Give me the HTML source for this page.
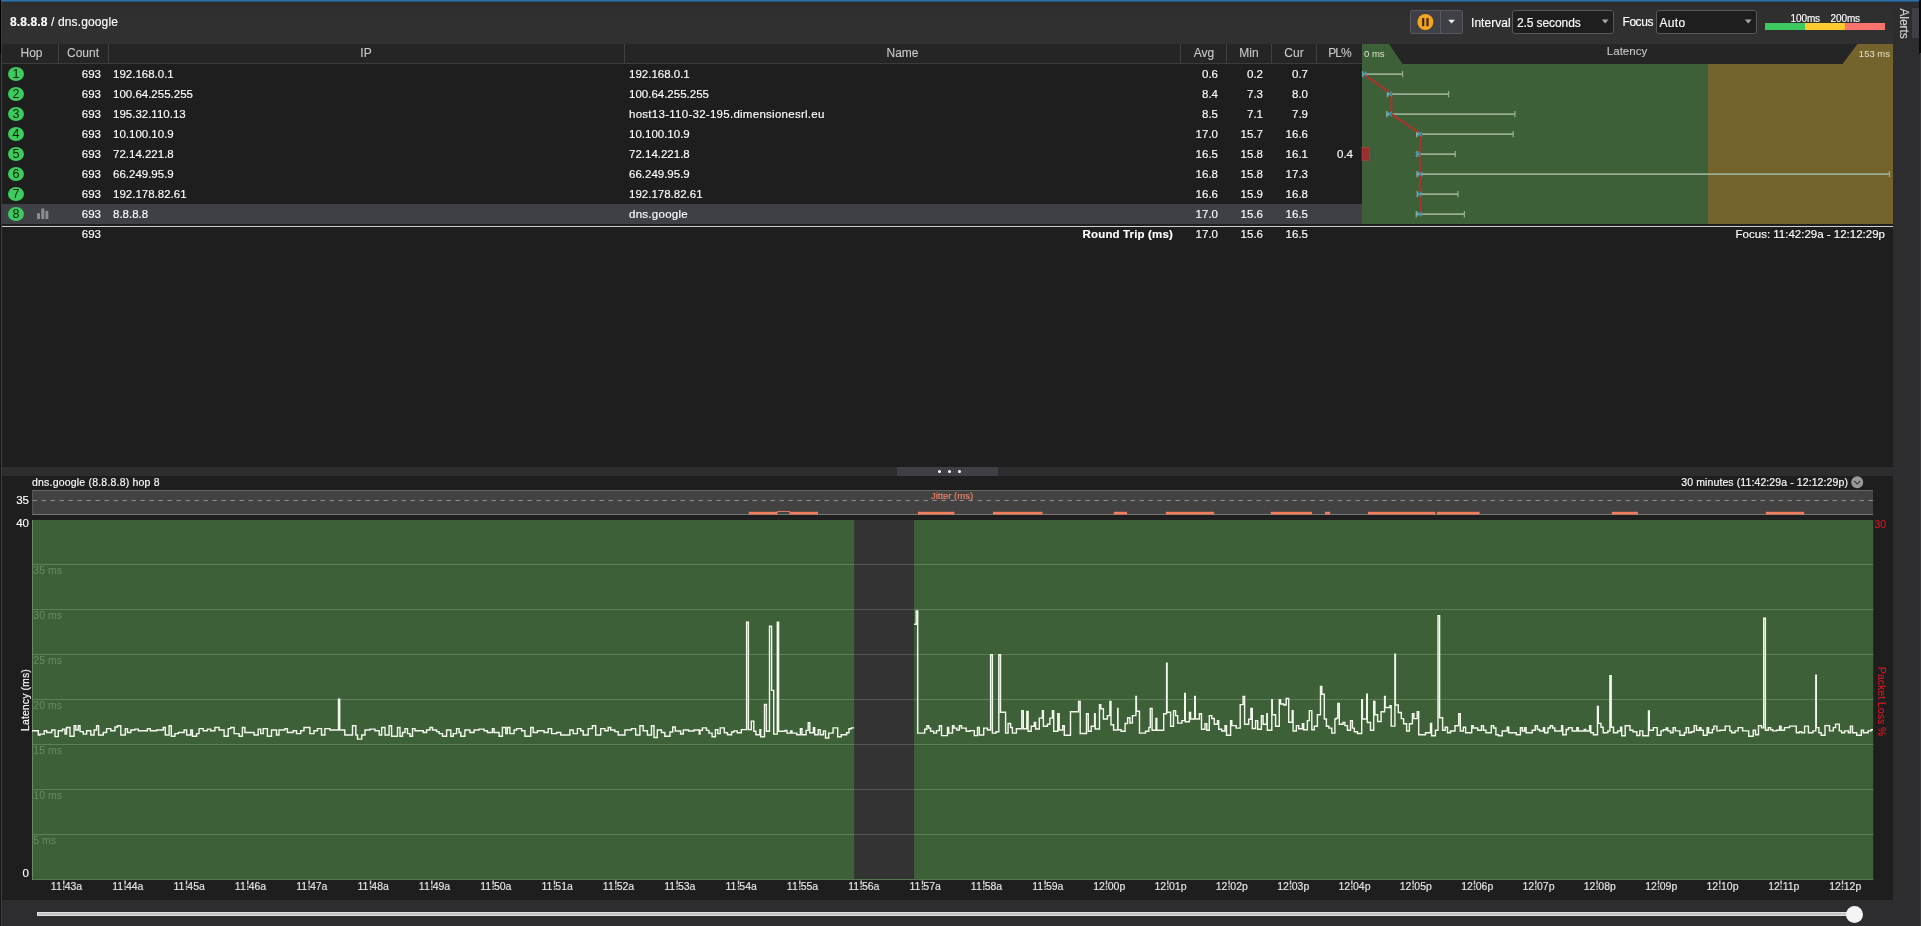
<!DOCTYPE html><html><head><meta charset="utf-8"><title>8.8.8.8 / dns.google</title><style>
*{margin:0;padding:0;box-sizing:border-box}
html,body{width:1921px;height:926px;overflow:hidden;background:#1e1e1e}
body{position:relative;will-change:transform;-webkit-text-stroke:0.14px;font-family:"Liberation Sans",sans-serif;font-size:11.5px;color:#fff;line-height:1}
.a{position:absolute;white-space:nowrap}
.t{position:absolute;white-space:nowrap;height:20px;line-height:20px}
.r{text-align:right}
.c{text-align:center}
.h{color:#c9c9c9;font-size:12px;-webkit-text-stroke:0.1px}
.sep{position:absolute;top:44px;width:1px;height:19px;background:#3f3f46}
.num{-webkit-text-stroke:0;position:absolute;left:8px;width:16.2px;height:14.4px;border-radius:50%;background:#3dcb5e;color:#0e200d;font-size:12.5px;line-height:14.8px;text-align:center}
.tl{position:absolute;top:880px;width:40px;text-align:center;font-size:10.5px;line-height:12px;color:#e6e6e6}
.gl{-webkit-text-stroke:0;position:absolute;left:33.3px;font-size:10.5px;color:#6a8962;line-height:12px}
</style></head><body>
<div class="a" style="left:0;top:0;width:1919px;height:1px;background:#2d72ac"></div><div class="a" style="left:0;top:1px;width:1919px;height:1px;background:#234f78"></div>
<div class="a" style="left:0;top:2px;width:1921px;height:41.5px;background:linear-gradient(#2d2d2e,#2f2f30 25%,#313132)"></div>
<div class="a" style="left:1893px;top:2px;width:28px;height:924px;background:#2d2d30"></div>
<div class="a" style="left:1912px;top:8px;width:7px;height:30px;background:#3f3f46"></div>
<div class="a" style="left:1919.3px;top:0;width:2px;height:54px;background:#0a0a0a"></div>
<div class="a" style="left:1919.5px;top:53px;width:1px;height:873px;background:#3a3a3d"></div>
<div class="a" style="left:1898px;top:8px;width:12px;height:30px;"><div style="position:absolute;left:0;top:0;transform-origin:0 0;transform:translate(11.7px,0.3px) rotate(90deg);font-size:12.2px;line-height:13px;color:#d2d2d2;white-space:nowrap;letter-spacing:-0.1px">Alerts</div></div>
<div class="a" style="left:0;top:0;width:1px;height:54px;background:#000"></div><div class="a" style="left:0;top:54px;width:1px;height:872px;background:#141818"></div>
<div class="a" style="left:1px;top:2px;width:1px;height:924px;background:#3a3e3e"></div>
<div class="a" style="left:10px;top:15px;font-size:12px;line-height:14px;letter-spacing:0.13px"><b>8.8.8.8</b> / dns.google</div>
<div class="a" style="left:1409.5px;top:10px;width:53px;height:23.5px;background:#3f3f46;border:1px solid #56565c;border-radius:2px"></div>
<div class="a" style="left:1440px;top:11px;width:1px;height:21.5px;background:#5a5a60"></div>
<svg class="a" style="left:1417px;top:14px" width="17" height="17" viewBox="0 0 17 17"><circle cx="8.4" cy="8" r="8" fill="#f7a51c"/><rect x="5.1" y="4" width="2.2" height="8.2" fill="#3a2a10"/><rect x="9.4" y="4" width="2.2" height="8.2" fill="#3a2a10"/></svg>
<svg class="a" style="left:1447px;top:19px" width="10" height="6" viewBox="0 0 10 6"><path d="M1.2 0.8H8.0L4.6 4.6Z" fill="#f0f0f0"/></svg>
<div class="a" style="left:1471px;top:15.5px;font-size:12px;line-height:14px;letter-spacing:0.05px">Interval</div>
<div class="a" style="left:1511.8px;top:10px;width:102.2px;height:23.5px;background:#1e1e1e;border:1px solid #58585c;border-radius:3px"></div>
<div class="a" style="left:1517px;top:16px;font-size:12px;line-height:14px;letter-spacing:-0.1px">2.5 seconds</div>
<svg class="a" style="left:1601px;top:19px" width="10" height="6" viewBox="0 0 10 6"><path d="M0.8 0.6H7.6L4.2 4.6Z" fill="#a8a8a8"/></svg>
<div class="a" style="left:1622.5px;top:15px;font-size:12px;line-height:14px;letter-spacing:-0.45px">Focus</div>
<div class="a" style="left:1655.5px;top:10px;width:101px;height:23.5px;background:#1e1e1e;border:1px solid #58585c;border-radius:3px"></div>
<div class="a" style="left:1659.5px;top:16px;font-size:12px;line-height:14px;letter-spacing:0.3px">Auto</div>
<svg class="a" style="left:1744px;top:19px" width="10" height="6" viewBox="0 0 10 6"><path d="M0.8 0.6H7.6L4.2 4.6Z" fill="#a8a8a8"/></svg>
<div class="a" style="left:1765px;top:23px;width:40px;height:6.8px;background:#3ec95e"></div>
<div class="a" style="left:1805px;top:23px;width:40px;height:6.8px;background:#fdca30"></div>
<div class="a" style="left:1845px;top:23px;width:40.3px;height:6.8px;background:#fa746e"></div>
<div class="a" style="left:1790.5px;top:13px;font-size:10px;line-height:12px;letter-spacing:-0.1px">100ms</div>
<div class="a" style="left:1830.5px;top:13px;font-size:10px;line-height:12px;letter-spacing:-0.1px">200ms</div>
<div class="a" style="left:2px;top:43.5px;width:1891px;height:20px;background:#252526"></div>
<div class="a" style="left:2px;top:63px;width:1360px;height:1px;background:#3c3c40"></div>
<div class="sep" style="left:58px"></div>
<div class="sep" style="left:108px"></div>
<div class="sep" style="left:624px"></div>
<div class="sep" style="left:1180px"></div>
<div class="sep" style="left:1226px"></div>
<div class="sep" style="left:1271px"></div>
<div class="sep" style="left:1316px"></div>
<div class="t c h" style="left:-8.5px;top:42.8px;width:80px">Hop</div>
<div class="t c h" style="left:43px;top:42.8px;width:80px">Count</div>
<div class="t c h" style="left:326px;top:42.8px;width:80px">IP</div>
<div class="t c h" style="left:862.5px;top:42.8px;width:80px">Name</div>
<div class="t c h" style="left:1164px;top:42.8px;width:80px">Avg</div>
<div class="t c h" style="left:1209px;top:42.8px;width:80px">Min</div>
<div class="t c h" style="left:1254px;top:42.8px;width:80px">Cur</div>
<div class="t c h" style="left:1299.5px;top:42.8px;width:80px"><span style="letter-spacing:-0.9px">PL%</span></div>
<div class="t c h" style="left:1587px;top:41px;width:80px"><span style="font-size:11.5px">Latency</span></div>
<svg class="a" style="left:0;top:0" width="1921" height="240" viewBox="0 0 1921 240"><rect x="1362" y="63" width="531" height="1" fill="#1f271e"/><rect x="1362" y="64" width="531" height="160" fill="#3e6038"/><rect x="1708" y="64" width="185" height="160" fill="#75632d"/><path d="M1362 44H1389L1402.5 64H1362Z" fill="#3e6038"/><path d="M1893 44H1857.5L1842.5 64H1893Z" fill="#75632d"/><path d="M1362.6 74.1H1402.6" stroke="#97ae93" stroke-width="1.6" fill="none"/><path d="M1362.6 70.9V77.3M1402.6 70.9V77.3" stroke="#97ae93" stroke-width="1.2" fill="none"/><path d="M1387.4 94.1H1448.6" stroke="#97ae93" stroke-width="1.6" fill="none"/><path d="M1387.4 90.9V97.3M1448.6 90.9V97.3" stroke="#97ae93" stroke-width="1.2" fill="none"/><path d="M1386.8 114.1H1515.0" stroke="#97ae93" stroke-width="1.6" fill="none"/><path d="M1386.8 110.9V117.3M1515.0 110.9V117.3" stroke="#97ae93" stroke-width="1.2" fill="none"/><path d="M1416.6 134.1H1513.2" stroke="#97ae93" stroke-width="1.6" fill="none"/><path d="M1416.6 130.9V137.3M1513.2 130.9V137.3" stroke="#97ae93" stroke-width="1.2" fill="none"/><path d="M1417.0 154.1H1455.3" stroke="#97ae93" stroke-width="1.6" fill="none"/><path d="M1417.0 150.9V157.3M1455.3 150.9V157.3" stroke="#97ae93" stroke-width="1.2" fill="none"/><path d="M1417.0 174.1H1889.5" stroke="#97ae93" stroke-width="1.6" fill="none"/><path d="M1417.0 170.9V177.3M1889.5 170.9V177.3" stroke="#97ae93" stroke-width="1.2" fill="none"/><path d="M1417.3 194.1H1458.0" stroke="#97ae93" stroke-width="1.6" fill="none"/><path d="M1417.3 190.9V197.3M1458.0 190.9V197.3" stroke="#97ae93" stroke-width="1.2" fill="none"/><path d="M1416.3 214.1H1464.4" stroke="#97ae93" stroke-width="1.6" fill="none"/><path d="M1416.3 210.9V217.3M1464.4 210.9V217.3" stroke="#97ae93" stroke-width="1.2" fill="none"/><polyline points="1364.1,74.1 1391.2,94.1 1391.5,114.1 1421.0,134.1 1419.3,154.1 1420.3,174.1 1419.6,194.1 1421.0,214.1" fill="none" stroke="#a8342c" stroke-width="2"/><path d="M1361.9 71.8l4.6 4.6m0 -4.6l-4.6 4.6" stroke="#3ba2c1" stroke-width="1.25" stroke-opacity="0.92" fill="none"/><path d="M1387.5 91.8l4.6 4.6m0 -4.6l-4.6 4.6" stroke="#3ba2c1" stroke-width="1.25" stroke-opacity="0.92" fill="none"/><path d="M1387.3 111.8l4.6 4.6m0 -4.6l-4.6 4.6" stroke="#3ba2c1" stroke-width="1.25" stroke-opacity="0.92" fill="none"/><path d="M1417.3 131.8l4.6 4.6m0 -4.6l-4.6 4.6" stroke="#3ba2c1" stroke-width="1.25" stroke-opacity="0.92" fill="none"/><path d="M1415.6 151.8l4.6 4.6m0 -4.6l-4.6 4.6" stroke="#3ba2c1" stroke-width="1.25" stroke-opacity="0.92" fill="none"/><path d="M1417.9 171.8l4.6 4.6m0 -4.6l-4.6 4.6" stroke="#3ba2c1" stroke-width="1.25" stroke-opacity="0.92" fill="none"/><path d="M1416.9 191.8l4.6 4.6m0 -4.6l-4.6 4.6" stroke="#3ba2c1" stroke-width="1.25" stroke-opacity="0.92" fill="none"/><path d="M1416.9 211.8l4.6 4.6m0 -4.6l-4.6 4.6" stroke="#3ba2c1" stroke-width="1.25" stroke-opacity="0.92" fill="none"/><rect x="1362" y="147.3" width="7.5" height="13.2" fill="#9a2f2f" stroke="#b04545" stroke-width="0.6"/></svg>
<div class="a" style="left:1364px;top:47.5px;font-size:9.5px;line-height:12px;-webkit-text-stroke:0;color:#d4e3cf">0 ms</div>
<div class="a r" style="left:1840px;width:50px;top:47.5px;font-size:9.5px;line-height:12px;-webkit-text-stroke:0;color:#e6e0c4">153 ms</div>
<div class="num" style="top:66.8px">1</div>
<div class="t r" style="left:51px;top:63.8px;width:50px">693</div>
<div class="t" style="left:113px;top:63.8px">192.168.0.1</div>
<div class="t" style="left:629px;top:63.8px">192.168.0.1</div>
<div class="t r" style="left:1168px;top:63.8px;width:50px">0.6</div>
<div class="t r" style="left:1213px;top:63.8px;width:50px">0.2</div>
<div class="t r" style="left:1258px;top:63.8px;width:50px">0.7</div>
<div class="num" style="top:86.8px">2</div>
<div class="t r" style="left:51px;top:83.8px;width:50px">693</div>
<div class="t" style="left:113px;top:83.8px">100.64.255.255</div>
<div class="t" style="left:629px;top:83.8px">100.64.255.255</div>
<div class="t r" style="left:1168px;top:83.8px;width:50px">8.4</div>
<div class="t r" style="left:1213px;top:83.8px;width:50px">7.3</div>
<div class="t r" style="left:1258px;top:83.8px;width:50px">8.0</div>
<div class="num" style="top:106.8px">3</div>
<div class="t r" style="left:51px;top:103.8px;width:50px">693</div>
<div class="t" style="left:113px;top:103.8px">195.32.110.13</div>
<div class="t" style="left:629px;top:103.8px;letter-spacing:0.27px">host13-110-32-195.dimensionesrl.eu</div>
<div class="t r" style="left:1168px;top:103.8px;width:50px">8.5</div>
<div class="t r" style="left:1213px;top:103.8px;width:50px">7.1</div>
<div class="t r" style="left:1258px;top:103.8px;width:50px">7.9</div>
<div class="num" style="top:126.8px">4</div>
<div class="t r" style="left:51px;top:123.8px;width:50px">693</div>
<div class="t" style="left:113px;top:123.8px">10.100.10.9</div>
<div class="t" style="left:629px;top:123.8px">10.100.10.9</div>
<div class="t r" style="left:1168px;top:123.8px;width:50px">17.0</div>
<div class="t r" style="left:1213px;top:123.8px;width:50px">15.7</div>
<div class="t r" style="left:1258px;top:123.8px;width:50px">16.6</div>
<div class="num" style="top:146.8px">5</div>
<div class="t r" style="left:51px;top:143.8px;width:50px">693</div>
<div class="t" style="left:113px;top:143.8px">72.14.221.8</div>
<div class="t" style="left:629px;top:143.8px">72.14.221.8</div>
<div class="t r" style="left:1168px;top:143.8px;width:50px">16.5</div>
<div class="t r" style="left:1213px;top:143.8px;width:50px">15.8</div>
<div class="t r" style="left:1258px;top:143.8px;width:50px">16.1</div>
<div class="t r" style="left:1303px;top:143.8px;width:50px">0.4</div>
<div class="num" style="top:166.8px">6</div>
<div class="t r" style="left:51px;top:163.8px;width:50px">693</div>
<div class="t" style="left:113px;top:163.8px">66.249.95.9</div>
<div class="t" style="left:629px;top:163.8px">66.249.95.9</div>
<div class="t r" style="left:1168px;top:163.8px;width:50px">16.8</div>
<div class="t r" style="left:1213px;top:163.8px;width:50px">15.8</div>
<div class="t r" style="left:1258px;top:163.8px;width:50px">17.3</div>
<div class="num" style="top:186.8px">7</div>
<div class="t r" style="left:51px;top:183.8px;width:50px">693</div>
<div class="t" style="left:113px;top:183.8px">192.178.82.61</div>
<div class="t" style="left:629px;top:183.8px">192.178.82.61</div>
<div class="t r" style="left:1168px;top:183.8px;width:50px">16.6</div>
<div class="t r" style="left:1213px;top:183.8px;width:50px">15.9</div>
<div class="t r" style="left:1258px;top:183.8px;width:50px">16.8</div>
<div class="a" style="left:2px;top:204px;width:1360px;height:20px;background:#3e4046"></div>
<div class="num" style="top:206.8px">8</div>
<div class="t r" style="left:51px;top:203.8px;width:50px">693</div>
<div class="t" style="left:113px;top:203.8px">8.8.8.8</div>
<div class="t" style="left:629px;top:203.8px;letter-spacing:0.27px">dns.google</div>
<div class="t r" style="left:1168px;top:203.8px;width:50px">17.0</div>
<div class="t r" style="left:1213px;top:203.8px;width:50px">15.6</div>
<div class="t r" style="left:1258px;top:203.8px;width:50px">16.5</div>
<svg class="a" style="left:36px;top:207px" width="14" height="13" viewBox="0 0 14 13"><rect x="1" y="6.2" width="3" height="5.8" fill="#8c8c8c"/><rect x="5.3" y="1.5" width="3" height="10.5" fill="#8c8c8c"/><rect x="9.4" y="3.9" width="2.9" height="8.1" fill="#8c8c8c"/></svg>
<div class="a" style="left:2px;top:225.8px;width:1891px;height:1.4px;background:#cfcfcf"></div>
<div class="t r" style="left:51px;top:223.6px;width:50px">693</div>
<div class="t r" style="left:973px;top:223.6px;width:200px;font-weight:bold;letter-spacing:0.15px">Round Trip (ms)</div>
<div class="t r" style="left:1168px;top:223.6px;width:50px">17.0</div>
<div class="t r" style="left:1213px;top:223.6px;width:50px">15.6</div>
<div class="t r" style="left:1258px;top:223.6px;width:50px">16.5</div>
<div class="t r" style="left:1585px;top:223.6px;width:300px">Focus: 11:42:29a - 12:12:29p</div>
<div class="a" style="left:2px;top:467.2px;width:1891px;height:9.2px;background:#2d2d30"></div>
<div class="a" style="left:897px;top:467.2px;width:100.5px;height:9.2px;background:#3f3f46"></div>
<div class="a" style="left:937.5px;top:469.6px;width:3.8px;height:3.8px;border-radius:50%;background:#fff"></div>
<div class="a" style="left:947.6px;top:469.6px;width:3.8px;height:3.8px;border-radius:50%;background:#fff"></div>
<div class="a" style="left:957.6px;top:469.6px;width:3.8px;height:3.8px;border-radius:50%;background:#fff"></div>
<div class="a" style="left:32px;top:475.8px;font-size:10.5px;line-height:12px;letter-spacing:0.2px">dns.google (8.8.8.8) hop 8</div>
<div class="a r" style="left:1548px;width:300px;top:475.6px;font-size:10.5px;line-height:12px;letter-spacing:0.1px">30 minutes (11:42:29a - 12:12:29p)</div>
<svg class="a" style="left:1851px;top:476.4px" width="13" height="13" viewBox="0 0 13 13"><circle cx="6.2" cy="6.2" r="6" fill="#9a9a9a"/><path d="M3.2 5l3 3l3 -3" stroke="#4a4a4a" stroke-width="1.5" fill="none"/></svg>
<div class="a" style="left:32px;top:490px;width:1841px;height:25px;background:#424242;border-top:1px solid #666;border-bottom:1px solid #777;border-left:1px solid #555"></div>
<svg class="a" style="left:0;top:486px" width="1921" height="34" viewBox="0 486 1921 34"><path d="M32.6 500.5H1873" stroke="#929292" stroke-width="1" stroke-dasharray="4.2 4.8" fill="none"/><rect x="748.8" y="511.8" width="28.5" height="2.6" fill="#f47d5e"/><rect x="789.8" y="511.8" width="28.2" height="2.6" fill="#f47d5e"/><rect x="918.0" y="511.8" width="36.4" height="2.6" fill="#f47d5e"/><rect x="993.0" y="511.8" width="49.5" height="2.6" fill="#f47d5e"/><rect x="1113.8" y="511.8" width="13.2" height="2.6" fill="#f47d5e"/><rect x="1165.8" y="511.8" width="48.4" height="2.6" fill="#f47d5e"/><rect x="1270.8" y="511.8" width="41.2" height="2.6" fill="#f47d5e"/><rect x="1325.0" y="511.8" width="5.2" height="2.6" fill="#f47d5e"/><rect x="1368.0" y="511.8" width="67.4" height="2.6" fill="#f47d5e"/><rect x="1437.0" y="511.8" width="42.6" height="2.6" fill="#f47d5e"/><rect x="1611.8" y="511.8" width="26.2" height="2.6" fill="#f47d5e"/><rect x="1765.8" y="511.8" width="38.4" height="2.6" fill="#f47d5e"/><path d="M777.3 513.5V511.5H789.8V513.5" stroke="#f47d5e" stroke-width="0.9" fill="none"/></svg>
<div class="a c" style="left:902px;width:100px;top:490.2px;font-size:9.5px;line-height:12px;color:#f08468">Jitter (ms)</div>
<div class="a r" style="left:0;width:29px;top:494px;font-size:11.5px;line-height:12px">35</div>
<div class="a r" style="left:0;width:29px;top:516.5px;font-size:11.5px;line-height:12px">40</div>
<div class="a r" style="left:0;width:29px;top:866.5px;font-size:11.5px;line-height:12px">0</div>
<svg class="a" style="left:0;top:515px" width="1921" height="370" viewBox="0 515 1921 370"><rect x="32" y="520" width="1841.2" height="360" fill="#3e6038"/><rect x="854.2" y="520" width="59.9" height="360" fill="#333333"/><path d="M32 834.5H854.2M914.1 834.5H1873.2" stroke="#5d7e57" stroke-width="1" fill="none"/><path d="M854.2 834.5H914.1" stroke="#555555" stroke-width="1" fill="none"/><path d="M32 789.5H854.2M914.1 789.5H1873.2" stroke="#5d7e57" stroke-width="1" fill="none"/><path d="M854.2 789.5H914.1" stroke="#555555" stroke-width="1" fill="none"/><path d="M32 744.5H854.2M914.1 744.5H1873.2" stroke="#5d7e57" stroke-width="1" fill="none"/><path d="M854.2 744.5H914.1" stroke="#555555" stroke-width="1" fill="none"/><path d="M32 699.5H854.2M914.1 699.5H1873.2" stroke="#5d7e57" stroke-width="1" fill="none"/><path d="M854.2 699.5H914.1" stroke="#555555" stroke-width="1" fill="none"/><path d="M32 654.5H854.2M914.1 654.5H1873.2" stroke="#5d7e57" stroke-width="1" fill="none"/><path d="M854.2 654.5H914.1" stroke="#555555" stroke-width="1" fill="none"/><path d="M32 609.5H854.2M914.1 609.5H1873.2" stroke="#5d7e57" stroke-width="1" fill="none"/><path d="M854.2 609.5H914.1" stroke="#555555" stroke-width="1" fill="none"/><path d="M32 564.5H854.2M914.1 564.5H1873.2" stroke="#5d7e57" stroke-width="1" fill="none"/><path d="M854.2 564.5H914.1" stroke="#555555" stroke-width="1" fill="none"/><path d="M32 879.5H1873.2" stroke="#55754f" stroke-width="1" fill="none"/><path d="M32.5 520V880" stroke="#6b8866" stroke-width="1" fill="none"/><path d="M32.0 730.8H38.3V735.0H40.0V734.1H44.2V730.8H46.7V732.5H51.7V730.0H55.0V736.6H58.3V730.8H62.5V729.1H65.0V734.1H66.6V727.5H70.0V736.3H74.1V725.8H75.8V730.0H78.3V725.8H80.0V731.6H83.3V734.1H86.6V730.8H90.8V735.0H94.1V730.0H96.6V725.8H98.6V735.0H103.3V732.5H106.6V728.6H110.8V730.8H115.0V727.0H117.5V725.8H120.8V735.0H125.3V728.6H127.5V732.5H130.8V730.0H134.9V729.1H138.3V730.8H147.4V728.6H150.3V730.8H156.6V730.0H163.3V727.5H165.3V735.0H169.1V725.8H171.3V736.3H174.9V733.6H178.3V732.5H184.1V730.0H186.6V735.0H190.8V730.0H192.4V736.3H196.6V733.6H199.1V728.6H203.2V730.8H207.4V729.1H210.7V730.8H214.9V727.5H219.1V730.0H224.1V736.3H228.2V728.6H230.7V727.5H234.1V733.6H239.1V736.3H242.4V727.5H244.9V732.5H254.1V735.0H258.2V729.1H260.7V733.6H263.2V728.6H267.4V736.3H271.5V730.0H276.5V735.0H279.0V730.0H284.9V728.6H287.4V732.5H293.2V730.8H296.5V733.6H300.7V730.8H304.0V727.5H309.9V733.6H314.0V730.8H317.4V728.6H321.5V735.0H324.9V728.6H329.9V730.0H338.5V699.2H339.7V730.0H344.8V735.0H350.0V735.0H352.5V725.8H355.8V735.0H357.5V739.1H361.7V735.0H365.0V730.0H370.0V729.1H375.0V730.8H379.2V735.0H381.7V727.5H385.0V735.0H389.1V725.8H391.6V736.3H397.5V727.5H400.0V736.3H402.5V732.5H405.0V728.6H407.5V733.6H410.0V736.3H412.5V728.6H415.0V730.8H423.3V732.5H426.6V730.0H430.0V727.5H432.5V730.0H436.6V731.6H439.1V733.6H442.5V736.3H446.6V730.0H450.8V736.3H453.3V733.6H456.6V728.6H459.1V732.5H460.8V736.3H464.9V730.0H469.9V732.5H474.1V730.0H479.1V729.1H484.1V730.8H487.4V732.5H492.4V728.6H494.1V732.5H499.1V736.3H502.4V727.5H505.8V733.6H507.4V727.5H509.9V733.6H514.1V730.0H516.6V728.6H521.6V730.8H524.9V736.3H530.7V727.5H533.2V732.5H537.4V730.8H544.1V732.5H548.2V728.6H551.6V733.6H556.6V732.5H560.7V735.0H569.9V730.0H573.2V733.6H577.4V728.6H580.7V730.8H583.2V735.0H588.2V728.6H592.4V725.8H595.7V735.0H600.7V728.6H604.9V730.8H608.2V727.5H610.7V730.0H614.9V731.6H618.2V735.0H624.9V730.0H631.5V728.6H635.7V735.0H639.9V725.8H643.2V730.8H647.4V735.0H651.5V725.8H654.0V737.5H657.3V730.0H661.5V732.5H664.8V736.3H670.0V732.0H672.7V727.0H675.3V731.0H680.6V734.0H683.3V730.0H688.6V731.0H693.9V730.0H699.2V734.0H700.0V730.4H702.4V727.9H706.5V730.4H708.9V733.1H712.1V736.8H715.4V729.6H717.8V733.6H720.2V727.9H724.3V732.8H727.5V734.7H731.6V732.0H734.0V730.9H737.2V732.8H741.3V729.6H746.6V622.3H748.4V729.6H751.3V721.1H753.8V731.2H755.9V734.7H759.9V729.6H760.7V736.8H764.5V704.5H766.4V731.2H769.5V626.2H771.6V690.4H773.7V734.1H777.3V622.3H778.6V731.2H785.0V730.4H787.0V733.1H790.7V730.9H792.0V733.1H796.8V734.7H800.4V728.7H802.0V734.7H806.1V730.4H808.2V722.8H809.8V732.8H813.4V727.6H814.7V734.7H818.2V729.6H820.2V734.7H823.4V730.9H825.5V738.0H828.7V733.1H833.1V727.9H837.7V736.8H841.2V734.7H846.6V732.8H849.0V728.7H851.4V727.9H854.2" stroke="#f3f8ed" stroke-width="1.4" fill="none" stroke-linejoin="miter"/><path d="M914.1 624.3H916.2V611.0H917.7V733.1H924.7V729.3H926.9V725.8H928.7V728.1H930.6V731.2H933.7V733.1H936.5V730.6H939.4V725.8H941.5V735.6H947.5V727.5H948.7V733.1H952.5V725.8H954.0V728.1H956.9V730.0H959.4V725.8H961.5V728.1H966.2V731.2H970.0V730.6H974.3V735.6H977.5V727.5H979.3V735.0H983.7V728.1H987.5V730.0H990.6V654.7H992.4V733.1H996.0V731.8H998.8V654.7H1000.5V712.2H1005.6V733.1H1008.1V723.5H1010.6V727.5H1012.4V733.1H1016.4V728.7H1021.8V710.6H1023.3V728.7H1026.8V711.5H1028.1V731.2H1031.2V726.2H1034.3V722.5H1035.6V729.0H1039.3V718.1H1042.4V710.6H1043.4V726.2H1047.4V724.3H1049.9V718.1H1052.4V710.6H1053.7V731.2H1057.8V713.7H1059.2V730.0H1062.7V725.6H1064.3V735.2H1070.5V711.8H1078.6V701.5H1080.2V733.5H1086.5V713.7H1088.3V731.2H1091.2V726.2H1094.6V713.7H1095.2V729.0H1099.5V704.6H1100.8V708.7H1103.4V719.0H1107.4V715.6H1109.9V701.5H1111.0V724.7H1113.6V730.0H1117.7V708.5H1118.0V729.7H1121.1V731.2H1125.1V723.5H1127.6V717.7H1129.9V723.1H1132.4V715.6H1135.9V696.5H1136.4V711.2H1139.5V733.1H1145.5V731.2H1148.9V727.5H1150.3V708.5H1152.1V730.2H1156.0V718.5H1156.8V730.2H1163.7V713.7H1166.6V663.1H1167.1V712.2H1170.6V726.2H1173.5V710.6H1175.6V715.6H1177.7V723.1H1181.9V720.6H1184.7V693.5H1185.3V721.8H1189.4V712.5H1190.6V719.0H1194.7V696.5H1195.3V719.0H1199.4V713.7H1201.5V729.3H1205.0V723.7H1206.8V730.2H1209.3V715.6H1211.8V718.5H1214.3V724.3H1217.5V720.6H1218.7V729.3H1221.8V731.0H1225.0V725.6H1226.5V735.2H1230.6V720.6H1231.8V725.6H1236.2V728.1H1240.2V704.6H1243.1V696.5H1244.6V724.3H1248.7V719.3H1250.9V708.5H1252.3V728.5H1255.6V720.6H1257.7V729.3H1261.4V715.6H1263.1V724.3H1266.8V713.7H1267.3V730.2H1271.8V699.7H1272.3V714.7H1275.6V726.2H1279.3V699.7H1280.6V704.0H1283.7V705.0H1286.2V698.5H1288.7V722.2H1292.2V710.6H1293.1V731.0H1296.4V725.6H1298.7V728.7H1302.4V723.7H1303.7V729.7H1307.4V720.6H1309.3V710.6H1311.8V729.7H1314.3V726.2H1317.4V714.7H1320.5V686.5H1321.8V694.3H1324.3V719.0H1326.4V726.2H1328.9V728.1H1331.8V733.1H1334.9V719.0H1336.2V718.1H1337.8V703.5H1339.3V724.3H1343.0V722.5H1344.9V725.6H1347.4V730.2H1350.5V720.6H1352.4V728.1H1354.3V731.8H1357.4V733.5H1361.7V699.7H1362.4V719.0H1366.7V694.3H1367.3V722.5H1370.5V730.2H1373.7V701.5H1374.9V714.7H1377.6V721.5H1381.1V711.8H1384.6V696.5H1385.2V707.5H1390.0V705.6H1391.2V726.1H1394.9V654.2H1395.4V705.0H1398.3V712.5H1401.3V718.6H1403.6V723.7H1406.6V731.0H1409.4V723.7H1412.4V713.6H1413.9V718.6H1417.2V711.6H1418.7V734.8H1425.5V732.8H1430.5V723.4H1431.6V735.8H1435.4V730.2H1438.0V615.6H1439.6V717.7H1442.6V730.2H1445.2V727.2H1447.5V732.8H1450.5V731.0H1455.0V725.7H1458.7V713.6H1460.3V731.0H1463.3V727.2H1465.6V732.8H1471.7V725.7H1473.2V728.0H1477.7V730.2H1481.5V725.7H1483.5V730.2H1486.0V732.8H1491.3V725.7H1493.6V728.0H1495.9V734.8H1498.6V735.8H1502.2V731.0H1507.2V727.2H1508.7V732.8H1516.3V734.8H1520.4V727.7H1522.3V731.0H1524.6V727.7H1526.1V732.8H1532.2V730.2H1535.2V725.7H1537.4V729.5H1539.7V731.0H1543.5V727.7H1544.6V732.8H1548.0V728.0H1550.3V725.7H1552.6V728.0H1554.8V731.0H1561.6V725.7H1562.7V734.8H1566.2V729.5H1568.4V727.7H1572.2V731.0H1576.8V727.7H1578.3V731.0H1584.3V729.5H1585.8V731.0H1589.6V725.7H1590.8V732.8H1593.4V734.8H1597.5V706.5H1598.3V723.4H1601.0V727.2H1603.2V732.8H1607.8V731.0H1609.9V675.8H1611.2V727.2H1613.5V732.8H1617.6V731.0H1620.6V727.2H1621.7V735.8H1625.2V725.7H1630.0V730.2H1633.0V731.7H1636.8V735.5H1639.8V730.9H1642.8V735.8H1648.5V711.0H1649.3V730.2H1653.4V727.6H1657.2V735.2H1661.0V730.9H1663.3V729.7H1666.3V727.9H1667.8V730.9H1670.5V732.7H1673.1V727.6H1675.3V730.9H1679.9V735.2H1684.4V732.7H1686.2V727.6H1688.6V732.7H1691.2V731.7H1694.2V725.6H1696.5V730.2H1699.5V727.6H1701.0V730.2H1703.3V735.2H1707.1V727.6H1708.6V732.7H1712.4V729.4H1713.9V726.1H1716.9V730.9H1719.9V730.2H1725.2V726.1H1729.8V730.9H1731.6V732.7H1735.0V730.9H1738.1V727.6H1742.6V730.9H1748.7V736.2H1753.2V730.2H1755.5V734.7H1758.5V725.6H1761.5V727.9H1763.7V618.3H1765.4V730.2H1768.3V727.6H1770.6V729.7H1772.8V730.9H1776.6V730.2H1779.6V726.1H1781.1V730.2H1784.5V727.6H1789.5V726.1H1796.3V732.7H1799.3V731.7H1801.6V732.7H1804.6V726.1H1808.4V732.7H1812.9V730.9H1815.8V675.3H1816.3V727.6H1818.9V732.7H1821.2V735.2H1825.0V725.6H1829.5V730.9H1833.3V727.6H1835.6V724.1H1839.3V730.9H1841.6V732.7H1844.6V730.9H1848.4V732.7H1850.4V726.1H1852.5V732.7H1856.7V735.2H1861.3V730.2H1863.5V732.7H1868.1V730.9H1871.1V729.7H1873.0" stroke="#f3f8ed" stroke-width="1.4" fill="none" stroke-linejoin="miter"/></svg>
<div class="gl" style="top:834.2px">5 ms</div>
<div class="gl" style="top:789.2px">10 ms</div>
<div class="gl" style="top:744.2px">15 ms</div>
<div class="gl" style="top:699.2px">20 ms</div>
<div class="gl" style="top:654.2px">25 ms</div>
<div class="gl" style="top:609.2px">30 ms</div>
<div class="gl" style="top:564.2px">35 ms</div>
<div class="a" style="left:19px;top:731px;transform-origin:0 0;transform:rotate(-90deg);font-size:10.5px;line-height:12px;letter-spacing:0.1px">Latency (ms)</div>
<div class="a" style="left:1887.5px;top:666.5px;transform-origin:0 0;transform:rotate(90deg);font-size:10.5px;line-height:12px;color:#dc1522">Packet Loss %</div>
<div class="a" style="left:1874.5px;top:518px;font-size:10.5px;line-height:12px;color:#dc1522">30</div>
<div class="tl" style="left:46.5px">11<span style="display:inline-block;width:2.9px"></span>43a</div>
<div class="tl" style="left:107.8px">11<span style="display:inline-block;width:2.9px"></span>44a</div>
<div class="tl" style="left:169.2px">11<span style="display:inline-block;width:2.9px"></span>45a</div>
<div class="tl" style="left:230.5px">11<span style="display:inline-block;width:2.9px"></span>46a</div>
<div class="tl" style="left:291.8px">11<span style="display:inline-block;width:2.9px"></span>47a</div>
<div class="tl" style="left:353.2px">11<span style="display:inline-block;width:2.9px"></span>48a</div>
<div class="tl" style="left:414.5px">11<span style="display:inline-block;width:2.9px"></span>49a</div>
<div class="tl" style="left:475.8px">11<span style="display:inline-block;width:2.9px"></span>50a</div>
<div class="tl" style="left:537.2px">11<span style="display:inline-block;width:2.9px"></span>51a</div>
<div class="tl" style="left:598.5px">11<span style="display:inline-block;width:2.9px"></span>52a</div>
<div class="tl" style="left:659.8px">11<span style="display:inline-block;width:2.9px"></span>53a</div>
<div class="tl" style="left:721.2px">11<span style="display:inline-block;width:2.9px"></span>54a</div>
<div class="tl" style="left:782.5px">11<span style="display:inline-block;width:2.9px"></span>55a</div>
<div class="tl" style="left:843.8px">11<span style="display:inline-block;width:2.9px"></span>56a</div>
<div class="tl" style="left:905.2px">11<span style="display:inline-block;width:2.9px"></span>57a</div>
<div class="tl" style="left:966.5px">11<span style="display:inline-block;width:2.9px"></span>58a</div>
<div class="tl" style="left:1027.8px">11<span style="display:inline-block;width:2.9px"></span>59a</div>
<div class="tl" style="left:1089.2px">12<span style="display:inline-block;width:2.9px"></span>00p</div>
<div class="tl" style="left:1150.5px">12<span style="display:inline-block;width:2.9px"></span>01p</div>
<div class="tl" style="left:1211.8px">12<span style="display:inline-block;width:2.9px"></span>02p</div>
<div class="tl" style="left:1273.2px">12<span style="display:inline-block;width:2.9px"></span>03p</div>
<div class="tl" style="left:1334.5px">12<span style="display:inline-block;width:2.9px"></span>04p</div>
<div class="tl" style="left:1395.8px">12<span style="display:inline-block;width:2.9px"></span>05p</div>
<div class="tl" style="left:1457.2px">12<span style="display:inline-block;width:2.9px"></span>06p</div>
<div class="tl" style="left:1518.5px">12<span style="display:inline-block;width:2.9px"></span>07p</div>
<div class="tl" style="left:1579.8px">12<span style="display:inline-block;width:2.9px"></span>08p</div>
<div class="tl" style="left:1641.2px">12<span style="display:inline-block;width:2.9px"></span>09p</div>
<div class="tl" style="left:1702.5px">12<span style="display:inline-block;width:2.9px"></span>10p</div>
<div class="tl" style="left:1763.8px">12<span style="display:inline-block;width:2.9px"></span>11p</div>
<div class="tl" style="left:1825.2px">12<span style="display:inline-block;width:2.9px"></span>12p</div>
<svg class="a" style="left:0;top:880px" width="1921" height="12" viewBox="0 880 1921 12"><path d="M63.8 880.4V890" stroke="#d0d0d0" stroke-width="1.5" stroke-dasharray="4.1 1.2 1.7 1 1.6 9" fill="none"/><path d="M125.1 880.4V890" stroke="#d0d0d0" stroke-width="1.5" stroke-dasharray="4.1 1.2 1.7 1 1.6 9" fill="none"/><path d="M186.5 880.4V890" stroke="#d0d0d0" stroke-width="1.5" stroke-dasharray="4.1 1.2 1.7 1 1.6 9" fill="none"/><path d="M247.8 880.4V890" stroke="#d0d0d0" stroke-width="1.5" stroke-dasharray="4.1 1.2 1.7 1 1.6 9" fill="none"/><path d="M309.1 880.4V890" stroke="#d0d0d0" stroke-width="1.5" stroke-dasharray="4.1 1.2 1.7 1 1.6 9" fill="none"/><path d="M370.5 880.4V890" stroke="#d0d0d0" stroke-width="1.5" stroke-dasharray="4.1 1.2 1.7 1 1.6 9" fill="none"/><path d="M431.8 880.4V890" stroke="#d0d0d0" stroke-width="1.5" stroke-dasharray="4.1 1.2 1.7 1 1.6 9" fill="none"/><path d="M493.1 880.4V890" stroke="#d0d0d0" stroke-width="1.5" stroke-dasharray="4.1 1.2 1.7 1 1.6 9" fill="none"/><path d="M554.5 880.4V890" stroke="#d0d0d0" stroke-width="1.5" stroke-dasharray="4.1 1.2 1.7 1 1.6 9" fill="none"/><path d="M615.8 880.4V890" stroke="#d0d0d0" stroke-width="1.5" stroke-dasharray="4.1 1.2 1.7 1 1.6 9" fill="none"/><path d="M677.1 880.4V890" stroke="#d0d0d0" stroke-width="1.5" stroke-dasharray="4.1 1.2 1.7 1 1.6 9" fill="none"/><path d="M738.5 880.4V890" stroke="#d0d0d0" stroke-width="1.5" stroke-dasharray="4.1 1.2 1.7 1 1.6 9" fill="none"/><path d="M799.8 880.4V890" stroke="#d0d0d0" stroke-width="1.5" stroke-dasharray="4.1 1.2 1.7 1 1.6 9" fill="none"/><path d="M861.1 880.4V890" stroke="#d0d0d0" stroke-width="1.5" stroke-dasharray="4.1 1.2 1.7 1 1.6 9" fill="none"/><path d="M922.5 880.4V890" stroke="#d0d0d0" stroke-width="1.5" stroke-dasharray="4.1 1.2 1.7 1 1.6 9" fill="none"/><path d="M983.8 880.4V890" stroke="#d0d0d0" stroke-width="1.5" stroke-dasharray="4.1 1.2 1.7 1 1.6 9" fill="none"/><path d="M1045.1 880.4V890" stroke="#d0d0d0" stroke-width="1.5" stroke-dasharray="4.1 1.2 1.7 1 1.6 9" fill="none"/><path d="M1106.5 880.4V890" stroke="#d0d0d0" stroke-width="1.5" stroke-dasharray="4.1 1.2 1.7 1 1.6 9" fill="none"/><path d="M1167.8 880.4V890" stroke="#d0d0d0" stroke-width="1.5" stroke-dasharray="4.1 1.2 1.7 1 1.6 9" fill="none"/><path d="M1229.1 880.4V890" stroke="#d0d0d0" stroke-width="1.5" stroke-dasharray="4.1 1.2 1.7 1 1.6 9" fill="none"/><path d="M1290.5 880.4V890" stroke="#d0d0d0" stroke-width="1.5" stroke-dasharray="4.1 1.2 1.7 1 1.6 9" fill="none"/><path d="M1351.8 880.4V890" stroke="#d0d0d0" stroke-width="1.5" stroke-dasharray="4.1 1.2 1.7 1 1.6 9" fill="none"/><path d="M1413.1 880.4V890" stroke="#d0d0d0" stroke-width="1.5" stroke-dasharray="4.1 1.2 1.7 1 1.6 9" fill="none"/><path d="M1474.5 880.4V890" stroke="#d0d0d0" stroke-width="1.5" stroke-dasharray="4.1 1.2 1.7 1 1.6 9" fill="none"/><path d="M1535.8 880.4V890" stroke="#d0d0d0" stroke-width="1.5" stroke-dasharray="4.1 1.2 1.7 1 1.6 9" fill="none"/><path d="M1597.1 880.4V890" stroke="#d0d0d0" stroke-width="1.5" stroke-dasharray="4.1 1.2 1.7 1 1.6 9" fill="none"/><path d="M1658.5 880.4V890" stroke="#d0d0d0" stroke-width="1.5" stroke-dasharray="4.1 1.2 1.7 1 1.6 9" fill="none"/><path d="M1719.8 880.4V890" stroke="#d0d0d0" stroke-width="1.5" stroke-dasharray="4.1 1.2 1.7 1 1.6 9" fill="none"/><path d="M1781.1 880.4V890" stroke="#d0d0d0" stroke-width="1.5" stroke-dasharray="4.1 1.2 1.7 1 1.6 9" fill="none"/><path d="M1842.5 880.4V890" stroke="#d0d0d0" stroke-width="1.5" stroke-dasharray="4.1 1.2 1.7 1 1.6 9" fill="none"/></svg>
<div class="a" style="left:2px;top:900px;width:1891px;height:26px;background:#2d2d30"></div>
<div class="a" style="left:37px;top:911.8px;width:1818px;height:4.4px;background:#c4c4c4;border:1px solid #e2e2e2"></div>
<div class="a" style="left:1845.5px;top:905.5px;width:17px;height:17px;border-radius:50%;background:#f4f4f4"></div>
</body></html>
